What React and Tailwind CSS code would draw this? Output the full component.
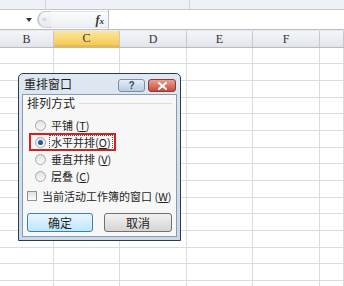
import React from "react";

const cols = [
  { name: "B", w: "w-[54px]" },
  { name: "C", w: "w-[66px]", active: true },
  { name: "D", w: "w-[67px]" },
  { name: "E", w: "w-[66px]" },
  { name: "F", w: "w-[67px]" },
  { name: "", w: "flex-1" },
];

const rowHeights = ["h-[16px]", "h-[17px]", "h-[17px]", "h-[16px]", "h-[17px]", "h-[17px]", "h-[16px]", "h-[17px]", "h-[17px]", "h-[16px]", "h-[17px]", "h-[17px]", "h-[16px]", "h-[17px]", "h-[17px]"];

const cjk = { fontFamily: '"Noto Sans CJK SC", "Noto Sans", sans-serif' };

function Radio({ checked }) {
  return (
    <span className="w-[11px] h-[11px] rounded-full border border-[#a8a8a8] bg-gradient-to-b from-[#e2e2e2] to-[#fafafa] flex items-center justify-center shrink-0">
      {checked && <span className="w-[5px] h-[5px] rounded-full bg-gradient-to-b from-[#2a6aa6] to-[#1d4f86]" />}
    </span>
  );
}

function Dialog() {
  return (
    <div className="absolute left-[18px] top-[73px] w-[163px] h-[168px] border border-[#2b3c4e] bg-gradient-to-b from-[#dfe8f2] to-[#c9d8e8] rounded-t-[5px] flex flex-col">
      <div className="h-[20px] flex items-center pl-[5px] pr-[4px]">
        <span className="text-[12px] text-[#1e1e1e] leading-none whitespace-nowrap" style={cjk}>重排窗口</span>
        <div className="ml-auto flex gap-[3px] mt-[3px]">
          <div className="w-[27px] h-[13px] rounded-[3px] border border-[#7b8ea5] bg-gradient-to-b from-[#e6eef7] to-[#b9cbe0] flex items-center justify-center text-[10px] font-bold text-[#2c4a6e] leading-none" style={{ fontFamily: '"Liberation Sans", sans-serif' }}>?</div>
          <div className="w-[28px] h-[13px] rounded-[3px] border border-[#8a3b32] bg-gradient-to-b from-[#e8a093] to-[#c9483a] flex items-center justify-center">
            <svg width="9" height="8" viewBox="0 0 9 8">
              <path d="M1 1 L8 7 M8 1 L1 7" stroke="#fff" strokeWidth="2" strokeLinecap="square" />
            </svg>
          </div>
        </div>
      </div>
      <div className="flex-1 mx-[3px] mb-[3px] border border-[#8a9bb0] bg-[#f7f7f7] flex flex-col px-[4px] text-[11px] text-[#1e1e1e] leading-none whitespace-nowrap" style={cjk}>
        <div className="flex items-center h-[16px]">
          <span className="text-[12px]">排列方式</span>
          <span className="flex-1 ml-[4px] border-t border-[#dcdcdc]" />
        </div>
        <div className="flex flex-col items-start mt-[6px]">
          <div className="flex items-center gap-[5px] h-[16px] pl-[8px]">
            <Radio />
            <span>平铺 (<u>T</u>)</span>
          </div>
          <div className="flex items-center h-[18px] ml-[2px] border-2 border-[#d81e1e] pl-[4px] pr-[1px] gap-[3px]">
            <Radio checked />
            <span className="border border-dotted border-[#555] px-[1px] py-[1px]">水平并排(<u>O</u>)</span>
          </div>
          <div className="flex items-center gap-[5px] h-[16px] pl-[8px]">
            <Radio />
            <span>垂直并排 (<u>V</u>)</span>
          </div>
          <div className="flex items-center gap-[5px] h-[18px] pl-[8px]">
            <Radio />
            <span>层叠 (<u>C</u>)</span>
          </div>
        </div>
        <div className="flex items-center gap-[5px] mt-[2px] h-[18px]">
          <span className="w-[10px] h-[10px] border border-[#8f8f8f] bg-gradient-to-b from-[#e0e0e0] to-[#fbfbfb] shrink-0" />
          <span>当前活动工作簿的窗口 (<u>W</u>)</span>
        </div>
        <div className="flex gap-[11px] mt-[8px] text-[12px]">
          <div className="w-[66px] h-[19px] rounded-[3px] border border-[#3c7fb1] bg-gradient-to-b from-[#eaf6fd] to-[#bee6fd] flex items-center justify-center">
            确定
          </div>
          <div className="w-[68px] h-[19px] rounded-[3px] border border-[#707070] bg-gradient-to-b from-[#f2f2f2] to-[#d4d4d4] flex items-center justify-center">
            取消
          </div>
        </div>
      </div>
    </div>
  );
}

export default function App() {
  return (
    <div className="relative w-[344px] h-[286px] overflow-hidden bg-white">
      <div className="h-[10px] bg-[#eef1f5] border-b border-[#c3c8ce] flex">
        <div className="w-[46px] border-r border-[#cfd3d8]" />
        <div className="w-[144px] border-r border-[#cfd3d8]" />
      </div>
      <div className="h-[20px] bg-white border-b border-[#b9bec5] flex items-center">
        <div className="w-[37px] flex justify-end pr-[5px]">
          <svg width="6" height="4" viewBox="0 0 6 4"><path d="M0 0 H6 L3 4 Z" fill="#333" /></svg>
        </div>
        <div className="w-[14px] h-[17px] rounded-l-full border-l-2 border-y border-[#c8ccd2] bg-gradient-to-b from-[#f7f8fa] to-[#e6e9ed] flex items-center pl-[3px]">
          <span className="w-[5px] h-[3px] rounded-full bg-[#d5d9de]" />
        </div>
        <div className="w-[57px] h-[17px] border-y border-[#e3e6ea] bg-gradient-to-b from-[#fafbfc] to-[#eef0f3] flex items-center justify-end pr-[4px]">
          <span className="text-[12px] italic font-bold text-[#333] leading-none" style={{ fontFamily: '"Liberation Serif", serif' }}>f<span className="text-[9px]">x</span></span>
        </div>
        <div className="h-full border-l border-[#b9bec5]" />
      </div>
      <div className="h-[1px] bg-[#e6e9ed]" />
      <div className="flex h-[17px] border-b border-[#b7bcc3] bg-gradient-to-b from-[#f3f5f8] to-[#e2e6eb]" style={{ fontFamily: '"Liberation Serif", serif' }}>
        {cols.map((c, i) => (
          <div
            key={i}
            className={`${c.w} shrink-0 border-r border-[#c4c9d0] flex items-center justify-center text-[12px] text-[#333] ${c.active ? "bg-gradient-to-b from-[#fbe69a] to-[#f6cb55] border-b-2 border-b-[#f2b93b]" : ""}`}
          >
            {c.name}
          </div>
        ))}
      </div>
      <div className="flex flex-col">
        {rowHeights.map((h, r) => (
          <div key={r} className={`flex ${h} border-b border-[#dadcdd]`}>
            {cols.map((c, i) => (
              <div key={i} className={`${c.w} shrink-0 border-r border-[#dadcdd]`} />
            ))}
          </div>
        ))}
      </div>
      <Dialog />
    </div>
  );
}
